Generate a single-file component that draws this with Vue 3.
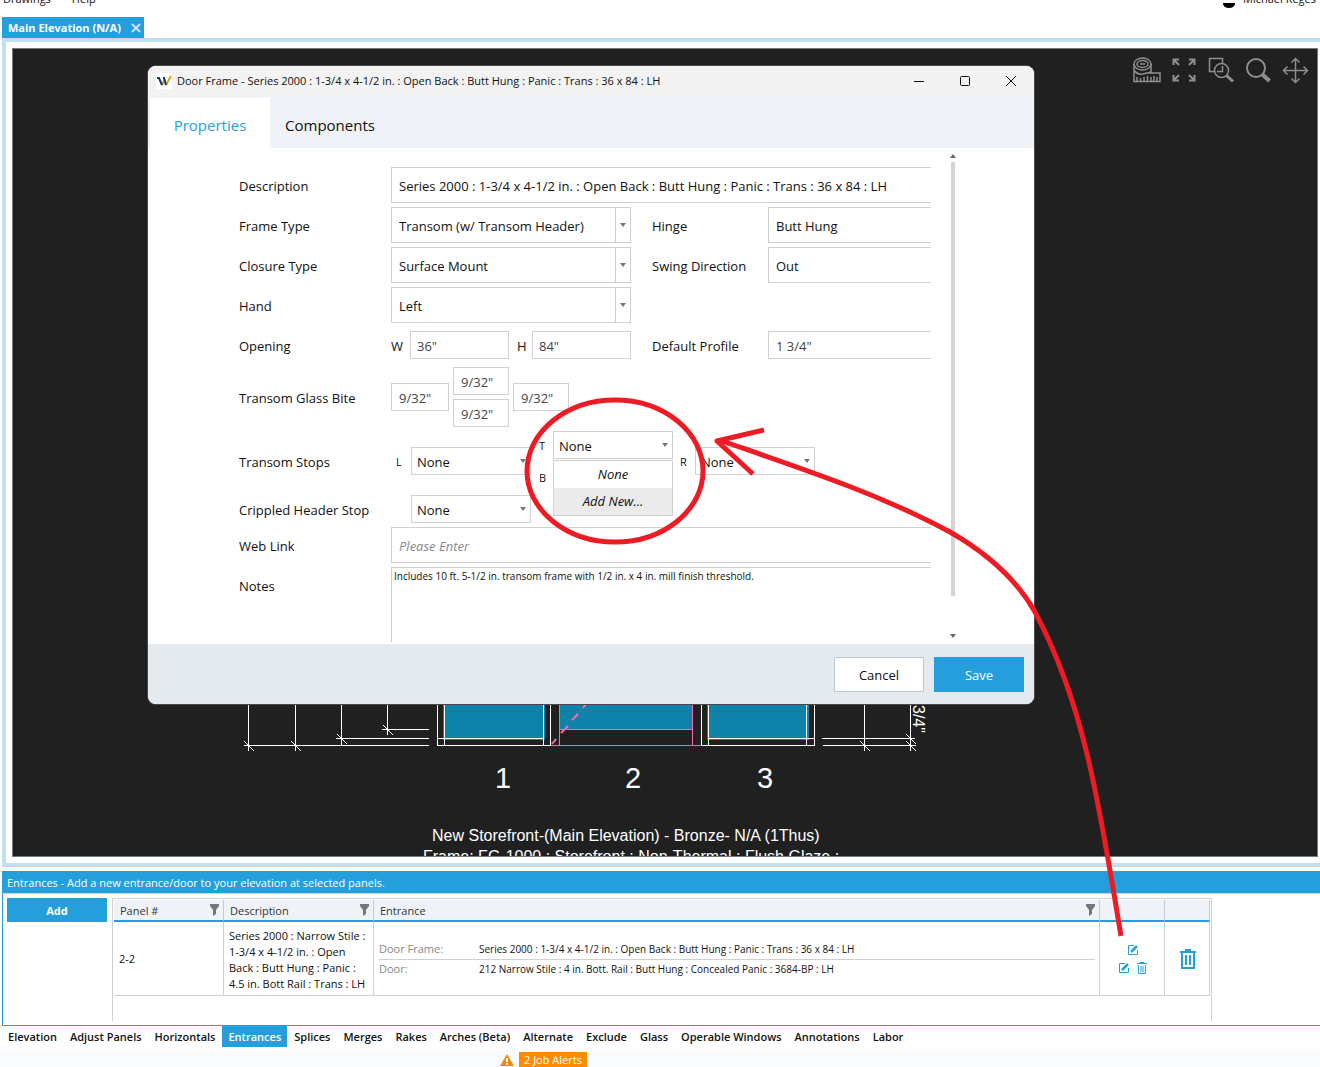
<script setup>
import { ref } from 'vue'

const title = 'Series 2000 : 1-3/4 x 4-1/2 in. : Open Back : Butt Hung : Panic : Trans : 36 x 84 : LH'
const description = ref(title)
const hinge = ref('Butt Hung')
const swing = ref('Out')
const openingWidth = ref('36"')
const openingHeight = ref('84"')
const profile = ref('1 3/4"')
const bite = ref({ left: '9/32"', top: '9/32"', bottom: '9/32"', right: '9/32"' })
const webLink = ref('')
const notes = ref('Includes 10 ft. 5-1/2 in. transom frame with 1/2 in. x 4 in. mill finish threshold.')

const dropdowns = [
  { id: 'frame-type', label: 'Frame Type', value: 'Transom (w/ Transom Header)', side: 'Hinge', sideId: 'hinge', model: hinge },
  { id: 'closure-type', label: 'Closure Type', value: 'Surface Mount', side: 'Swing Direction', sideId: 'swing', model: swing },
  { id: 'hand', label: 'Hand', value: 'Left' }
]

const sections = [
  'Elevation', 'Adjust Panels', 'Horizontals', 'Entrances', 'Splices', 'Merges', 'Rakes',
  'Arches (Beta)', 'Alternate', 'Exclude', 'Glass', 'Operable Windows', 'Annotations', 'Labor'
]
const activeSection = ref('Entrances')

const ticks = [[248, 745], [295, 745], [341, 738], [387, 729], [864, 745], [910, 738], [910, 745]]
</script>

<template>
  <div class="app">
    <header class="menubar">
      <nav class="menu">
        <a href="#drawings">Drawings</a>
        <a href="#help">Help</a>
      </nav>
      <div class="user">
        <svg width="14" height="18" viewBox="0 0 14 18" aria-hidden="true">
          <circle cx="7" cy="4" r="4" />
          <path d="M1 12h12v1q-1 4-6 4t-6-4z" />
        </svg>
        <span>Michael Reges</span>
      </div>
    </header>

    <div class="doc-tabs">
      <div class="doc-tab">
        <span>Main Elevation (N/A)</span>
        <button type="button" aria-label="Close tab">
          <svg width="10" height="10" viewBox="0 0 10 10"><path d="M1 1l8 8M9 1l-8 8" /></svg>
        </button>
      </div>
    </div>

    <main class="frame">
      <div class="stage">
        <svg class="drawing" aria-label="Elevation drawing">
          <g transform="translate(-13 -49)">
            <g fill="#0f82aa">
              <path d="M443 600h102v140H443zM559 600h134v129H559zM707 600h102v140H707z" />
            </g>
            <g class="lines white">
              <path d="M248.500 600V751M295.500 600V751M341.500 600V745M387.500 600V735" />
              <path d="M244 745.500H429M336 738.500H429M382 729.500H429" />
              <path d="M437.500 600V745.500H550.500V600M444.500 600V745M543.500 600V745M437 738.500H543" />
              <path d="M701.500 600V745.500H814.500V600M708.500 600V745M806.500 600V745M708 738.500H814" />
              <path d="M864.500 600V751M910.500 600V751M822 738.500H915M823 745.500H916" />
              <path v-for="([x, y], i) in ticks" :key="i" :d="`M${x - 4} ${y - 4}L${x + 6} ${y + 6}`" />
            </g>
            <g class="lines pink">
              <path d="M559.500 600V745M692.500 600V745M559 729.500H692M551 745.500H701" />
            </g>
            <path class="swing-line" d="M552 744l4-5M561 733l7-7M572 720l6-6M583 708l4-5" />
            <g class="numbers">
              <text x="503" y="788">1</text>
              <text x="633" y="788">2</text>
              <text x="765" y="788">3</text>
            </g>
            <g class="caption">
              <text x="432" y="841">New Storefront-(Main Elevation) - Bronze- N/A (1Thus)</text>
              <text x="423" y="862">Frame: FG-1000 : Storefront : Non-Thermal : Flush Glaze :</text>
              <text transform="translate(913 705) rotate(90)">3/4"</text>
            </g>
          </g>
        </svg>

        <div class="tools">
          <button type="button" aria-label="Measure">
            <svg viewBox="0 0 28 28">
              <path d="M1 8v17.500h26V17H14M1 14q3 5 9 4l8-2V8" />
              <ellipse cx="9.500" cy="8" rx="8.500" ry="6" />
              <ellipse cx="9.500" cy="8" rx="5.500" ry="3.500" />
              <path d="M7 8h5" />
              <path d="M4 25v-4M7.500 25v-3M11 25v-4M14.500 25v-5M18 25v-4M21 25v-5M24 25v-4" />
            </svg>
          </button>
          <button type="button" aria-label="Fit to window">
            <svg viewBox="0 0 28 28" class="bold">
              <path d="M3.500 9V3.500H9M4 4l5 5M19 3.500h5.500V9M24 4l-5 5M3.500 19v5.500H9M4 24l5-5M19 24.500h5.500V19M24 24l-5-5" />
            </svg>
          </button>
          <button type="button" aria-label="Zoom to selection">
            <svg viewBox="0 0 28 28">
              <path d="M7 15.500H2.500V2.500h13V7M10 15.500h5.500V10" />
              <circle cx="14.500" cy="14.500" r="7" />
              <path d="M19.500 19.500l6.500 6" stroke-width="3" />
            </svg>
          </button>
          <button type="button" aria-label="Zoom">
            <svg viewBox="0 0 28 28">
              <circle cx="12" cy="12" r="9" stroke-width="2" />
              <path d="M18.500 18.500l7 6.500" stroke-width="4" />
            </svg>
          </button>
          <button type="button" aria-label="Pan">
            <svg viewBox="0 0 28 28">
              <path d="M14.500 3v23M3 14.500h23M10.500 6.500l4-4 4 4M10.500 22.500l4 4 4-4M6.500 10.500l-4 4 4 4M22.500 10.500l4 4-4 4" />
            </svg>
          </button>
        </div>
      </div>
    </main>

    <section class="panel">
      <h2>Entrances - Add a new entrance/door to your elevation at selected panels.</h2>
      <div class="panel-body">
        <button type="button" class="add">Add</button>
        <div class="grid-box">
          <table>
            <colgroup>
              <col class="c-panel" /><col class="c-desc" /><col class="c-entrance" /><col class="c-edit" /><col class="c-delete" />
            </colgroup>
            <thead>
              <tr>
                <th v-for="name in ['Panel #', 'Description', 'Entrance']" :key="name">
                  <div class="th">
                    <span>{{ name }}</span>
                    <svg width="10" height="12" viewBox="0 0 10 12" aria-hidden="true"><path d="M1 0h9v2L7 6v4l-3 2V6L1 2z" /></svg>
                  </div>
                </th>
                <th></th>
                <th></th>
              </tr>
            </thead>
            <tbody>
              <tr>
                <td>2-2</td>
                <td class="desc">Series 2000 : Narrow Stile :<br />1-3/4 x 4-1/2 in. : Open<br />Back : Butt Hung : Panic :<br />4.5 in. Bott Rail : Trans : LH</td>
                <td>
                  <dl>
                    <div><dt>Door Frame:</dt><dd>{{ title }}</dd></div>
                    <div><dt>Door:</dt><dd>212 Narrow Stile : 4 in. Bott. Rail : Butt Hung : Concealed Panic : 3684-BP : LH</dd></div>
                  </dl>
                </td>
                <td>
                  <div class="edit-icons">
                    <button type="button" aria-label="Edit door frame">
                      <svg width="12" height="12" viewBox="0 0 12 12"><path d="M7 1.500H1.500v9h9V6" /><path d="M4 8l6-6" stroke-width="2.500" /></svg>
                    </button>
                    <div>
                      <button type="button" aria-label="Edit door">
                        <svg width="12" height="12" viewBox="0 0 12 12"><path d="M7 1.500H1.500v9h9V6" /><path d="M4 8l6-6" stroke-width="2.500" /></svg>
                      </button>
                      <button type="button" aria-label="Delete door">
                        <svg width="12" height="12" viewBox="0 0 12 12"><path d="M1 1.500h10M4 .5h4M2.500 3v8.500h7V3M5 4v6M7 4v6" /></svg>
                      </button>
                    </div>
                  </div>
                </td>
                <td>
                  <button type="button" class="delete" aria-label="Delete entrance">
                    <svg width="16" height="20" viewBox="0 0 16 20"><path d="M0 3h16M5 1h6M2 4v15h12V4M6 6v10M10 6v10" stroke-width="2" /></svg>
                  </button>
                </td>
              </tr>
            </tbody>
          </table>
        </div>
      </div>
    </section>

    <nav class="sections">
      <button
        v-for="name in sections"
        :key="name"
        type="button"
        :class="{ active: name === activeSection }"
        @click="activeSection = name"
      >{{ name }}</button>
    </nav>

    <footer class="status">
      <svg width="14" height="12" viewBox="0 0 14 12" aria-hidden="true">
        <path d="M7 0l7 12H0z" fill="#f58a07" />
        <path d="M7 4v4M7 9v2" stroke="#fff" stroke-width="2" />
      </svg>
      <a href="#alerts">2 Job Alerts</a>
    </footer>

    <div class="dialog" role="dialog" aria-labelledby="dialog-title">
      <div class="titlebar">
        <svg class="logo" width="16" height="16" viewBox="0 0 16 16" aria-hidden="true">
          <path d="M0 0h16v16H0z" fill="#fff" />
          <g fill="none" stroke-width="2">
            <path d="M10 12l5-9M6 12l3-6" stroke="#d9a70c" />
            <path d="M1 5h2l3 7M7 5h1l2 7" stroke="#0d3c66" />
          </g>
        </svg>
        <span id="dialog-title">Door Frame - {{ title }}</span>
        <div class="window-buttons">
          <button type="button" aria-label="Minimize"><svg width="12" height="12" viewBox="0 0 12 12"><path d="M1 6.500h10" /></svg></button>
          <button type="button" aria-label="Maximize"><svg width="12" height="12" viewBox="0 0 12 12"><rect x="1.500" y="1.500" width="9" height="9" rx="1" /></svg></button>
          <button type="button" aria-label="Close"><svg width="12" height="12" viewBox="0 0 12 12"><path d="M1 1l10 10M11 1L1 11" /></svg></button>
        </div>
      </div>

      <div class="dialog-tabs">
        <button type="button" class="active">Properties</button>
        <button type="button">Components</button>
      </div>

      <div class="dialog-body">
        <form id="frame-form" class="form" @submit.prevent>
          <label for="description">Description</label>
          <input id="description" v-model="description" class="field wide" type="text" />

          <template v-for="d in dropdowns" :key="d.id">
            <label :for="d.id" class="first">{{ d.label }}</label>
            <div class="select split">
              <select :id="d.id"><option>{{ d.value }}</option></select>
              <svg width="6" height="4" viewBox="0 0 6 4" aria-hidden="true"><path d="M0 0h6L3 4z" /></svg>
            </div>
            <template v-if="d.side">
              <label :for="d.sideId">{{ d.side }}</label>
              <input :id="d.sideId" v-model="d.model.value" class="field" type="text" />
            </template>
          </template>

          <span class="first">Opening</span>
          <div class="opening">
            <label for="opening-w">W</label>
            <input id="opening-w" v-model="openingWidth" class="small" type="text" />
            <label for="opening-h">H</label>
            <input id="opening-h" v-model="openingHeight" class="small" type="text" />
          </div>
          <label for="profile">Default Profile</label>
          <input id="profile" v-model="profile" class="small padded" type="text" />

          <span class="first">Transom Glass Bite</span>
          <div class="bite">
            <input v-model="bite.left" class="small padded" type="text" aria-label="Left glass bite" />
            <div class="pair">
              <input v-model="bite.top" class="small padded" type="text" aria-label="Top glass bite" />
              <input v-model="bite.bottom" class="small padded" type="text" aria-label="Bottom glass bite" />
            </div>
            <input v-model="bite.right" class="small padded" type="text" aria-label="Right glass bite" />
          </div>

          <span class="first">Transom Stops</span>
          <div class="stops">
            <label for="stop-l">L</label>
            <div class="select short">
              <select id="stop-l"><option>None</option></select>
              <svg width="6" height="4" viewBox="0 0 6 4" aria-hidden="true"><path d="M0 0h6L3 4z" /></svg>
            </div>
            <div class="stack">
              <label for="stop-t">T</label>
              <div class="select short">
                <select id="stop-t"><option>None</option></select>
                <svg width="6" height="4" viewBox="0 0 6 4" aria-hidden="true"><path d="M0 0h6L3 4z" /></svg>
                <ul class="options" role="listbox" aria-label="Top stop">
                  <li role="option" aria-selected="false">None</li>
                  <li role="option" aria-selected="true">Add New...</li>
                </ul>
              </div>
              <label for="stop-b">B</label>
              <div class="select short">
                <select id="stop-b"><option></option></select>
              </div>
            </div>
            <label for="stop-r">R</label>
            <div class="select short">
              <select id="stop-r"><option>None</option></select>
              <svg width="6" height="4" viewBox="0 0 6 4" aria-hidden="true"><path d="M0 0h6L3 4z" /></svg>
            </div>
          </div>

          <label for="crippled" class="first">Crippled Header Stop</label>
          <div class="stops crippled">
            <div class="select short">
              <select id="crippled"><option>None</option></select>
              <svg width="6" height="4" viewBox="0 0 6 4" aria-hidden="true"><path d="M0 0h6L3 4z" /></svg>
            </div>
          </div>

          <label for="web-link" class="first">Web Link</label>
          <input id="web-link" v-model="webLink" class="field wide" type="text" placeholder="Please Enter" />

          <label for="notes" class="first notes-label">Notes</label>
          <textarea id="notes" v-model="notes" class="wide"></textarea>
        </form>
        <div class="scrollbar" aria-hidden="true">
          <svg width="6" height="4" viewBox="0 0 6 4"><path d="M0 4h6L3 0z" /></svg>
          <div class="track"><div class="thumb"></div></div>
          <svg width="6" height="4" viewBox="0 0 6 4"><path d="M0 0h6L3 4z" /></svg>
        </div>
      </div>

      <div class="dialog-footer">
        <button type="button" class="cancel">Cancel</button>
        <button type="submit" form="frame-form" class="save">Save</button>
      </div>
    </div>

    <svg class="markup" aria-hidden="true">
      <ellipse cx="615" cy="471" rx="88" ry="71" />
      <path d="M1121 936C1110 870 1100 806 1087 754C1074 700 1058 655 1035 612C1018 582 992 556 950 532C880 494 800 468 722 441" />
      <path d="M764 430L717 441L753 474" />
    </svg>
  </div>
</template>

<style>
body {
  margin: 0;
  background: #fff;
}
</style>

<style scoped>
.app {
  position: relative;
  display: flex;
  flex-direction: column;
  height: 100vh;
  min-height: 1000px;
  overflow: hidden;
  font-family: "Open Sans", "Noto Sans", sans-serif;
  font-size: 11px;
  line-height: 16px;
  color: #111;
}
.app * {
  box-sizing: border-box;
}
button,
input,
select,
textarea {
  font: inherit;
  color: inherit;
  margin: 0;
  padding: 0;
  border: 0;
  border-radius: 0;
  background: none;
  outline: none;
}
a {
  color: inherit;
  text-decoration: none;
}

.menubar {
  display: flex;
  justify-content: space-between;
  align-items: flex-start;
  flex: none;
  height: 26px;
  margin-top: -9px;
  padding-left: 3px;
}
.menu {
  display: flex;
  gap: 21px;
}
.user {
  display: flex;
  gap: 7px;
  white-space: nowrap;
  padding-right: 4px;
}

.doc-tabs {
  flex: none;
  display: flex;
  padding-left: 2px;
}
.doc-tab {
  display: flex;
  align-items: center;
  gap: 10px;
  height: 21px;
  padding: 0 3px 0 6px;
  background: #259fdb;
  color: #fff;
  font-weight: 700;
}
.doc-tab button {
  display: flex;
}
.doc-tab svg {
  stroke: #c9e7f6;
  stroke-width: 2;
}

.frame {
  flex: 1;
  min-height: 0;
  display: flex;
  margin: 0 0 4px 2px;
  padding: 9px 2px 9px 6px;
  border-left: 4px solid #bfe1f2;
  border-top: 1px solid #cfd3d6;
  border-bottom: 1px solid #cfd3d6;
  box-shadow: inset 0 3px #bfe1f2, inset 0 -3px #bfe1f2;
}
.stage {
  position: relative;
  flex: 1;
  display: flex;
  justify-content: flex-end;
  align-items: flex-start;
  border: 1px solid #777;
  background: #202020;
  overflow: hidden;
}
.drawing {
  position: absolute;
  inset: 0;
  width: 100%;
  height: 100%;
}
.lines {
  fill: none;
  shape-rendering: crispEdges;
}
.white {
  stroke: #fff;
}
.pink {
  stroke: #ff69b4;
}
.swing-line {
  stroke: #ff69b4;
  stroke-width: 2;
}
.drawing text {
  font-family: "Liberation Sans", Arial, sans-serif;
  fill: #fff;
}
.numbers text {
  font-size: 29px;
  text-anchor: middle;
}
.caption text {
  font-size: 16px;
}
.tools {
  position: relative;
  display: flex;
  gap: 9px;
  padding: 7px 8px;
}
.tools button {
  width: 28px;
  height: 28px;
}
.tools svg {
  display: block;
  width: 28px;
  height: 28px;
  fill: none;
  stroke: #8e8e8e;
  stroke-width: 1.5;
}
.tools .bold {
  stroke-width: 2;
}

.panel {
  flex: none;
  margin-left: 2px;
}
.panel h2 {
  margin: 0;
  height: 22px;
  padding-left: 5px;
  background: #259fdb;
  color: #fff;
  font-size: 11px;
  font-weight: 400;
  line-height: 24px;
}
.panel-body {
  display: flex;
  align-items: flex-start;
  gap: 5px;
  height: 133px;
  padding: 4px;
  border-top: 1px solid #cfd3d6;
  border-left: 1px solid #259fdb;
  border-bottom: 1px solid #259fdb;
}
.add {
  width: 100px;
  height: 24px;
  padding-top: 2px;
  background: #259fdb;
  color: #fff;
  font-weight: 700;
}
.grid-box {
  align-self: stretch;
  padding: 1px 1px 0;
  border: 1px solid #d0d0d0;
  border-bottom: 0;
}
table {
  table-layout: fixed;
  width: 1096px;
  border-collapse: separate;
  border-spacing: 0;
}
.c-panel { width: 110px; }
.c-desc { width: 150px; }
.c-entrance { width: 726px; }
.c-edit { width: 65px; }
.c-delete { width: 45px; }
th {
  height: 22px;
  padding: 0 4px 0 6px;
  background: #eff3f8;
  border-right: 1px solid #c3cdd4;
  border-bottom: 2px solid #259fdb;
  font-weight: 400;
  color: #333;
  text-align: left;
}
.th {
  display: flex;
  justify-content: space-between;
  align-items: center;
}
.th span {
  padding-top: 1px;
}
.th svg {
  fill: #777;
}
td {
  height: 74px;
  padding: 0 4px 0 5px;
  border-right: 1px solid #d0d0d0;
  border-bottom: 1px solid #d0d0d0;
  vertical-align: middle;
}
.desc {
  padding-top: 2px;
  white-space: nowrap;
}
dl {
  margin: 0;
}
dl div {
  display: flex;
  height: 20px;
  align-items: center;
}
dl div + div {
  border-top: 1px solid #d0d0d0;
}
dt {
  width: 100px;
  color: #888;
}
dd {
  margin: 0;
  font-size: 10px;
}
.edit-icons,
.edit-icons button,
.delete {
  display: flex;
}
.edit-icons {
  flex-direction: column;
  align-items: center;
  gap: 6px;
}
.edit-icons div {
  display: flex;
  gap: 6px;
}
.edit-icons svg,
.delete svg {
  fill: none;
  stroke: #259fdb;
}
.delete {
  margin: 0 auto;
}

.sections {
  flex: none;
  display: flex;
  gap: 1px;
  height: 23px;
  padding-left: 2px;
}
.sections button {
  height: 21px;
  padding: 0 6px;
  font-weight: 600;
  white-space: nowrap;
}
.sections .active {
  background: #259fdb;
  color: #fff;
}
.status {
  flex: none;
  display: flex;
  align-items: center;
  gap: 5px;
  height: 18px;
  padding: 3px 0 0 500px;
  background: #fafbfd;
}
.status a {
  height: 15px;
  padding: 0 5px;
  background: #ff8c00;
  color: #fff;
  line-height: 16px;
}

.dialog {
  position: absolute;
  left: 148px;
  top: 66px;
  width: 886px;
  display: flex;
  flex-direction: column;
  border-radius: 8px;
  overflow: hidden;
  background: #fff;
  box-shadow: 0 0 0 1px #4a4a4a;
  font-size: 13px;
}
.titlebar {
  display: flex;
  align-items: center;
  height: 30px;
  padding-left: 8px;
  gap: 5px;
  background: #f3f3f3;
  font-size: 11px;
}
.window-buttons {
  display: flex;
  margin-left: auto;
}
.window-buttons button {
  display: flex;
  justify-content: center;
  align-items: center;
  width: 46px;
  height: 28px;
}
.window-buttons svg {
  fill: none;
  stroke: #111;
}
.dialog-tabs {
  display: flex;
  height: 52px;
  padding: 2px 2px 0;
  background: #eff3f8;
  font-size: 15px;
}
.dialog-tabs button {
  width: 120px;
  padding-top: 4px;
}
.dialog-tabs .active {
  background: #fff;
  color: #259fdb;
}
.dialog-body {
  display: flex;
  height: 496px;
  padding: 0 78px 2px 90px;
}
.form {
  flex: 1;
  min-width: 0;
  display: grid;
  grid-template-columns: 133px 240px 97px 240px;
  grid-auto-rows: max-content;
  column-gap: 20px;
  row-gap: 4px;
  align-items: center;
  padding-top: 19px;
  overflow: hidden;
}
.form > label,
.form > span {
  padding: 2px 0 0 1px;
}
.first {
  grid-column: 1;
}
.field,
.split {
  height: 36px;
}
.field,
.small,
textarea,
.select {
  border: 1px solid #d0d0d0;
  background: #fff;
}
.field {
  padding: 2px 7px 0;
}
.wide {
  grid-column: 2 / -1;
}
.field::placeholder {
  font-style: italic;
  color: #888;
}
.small {
  height: 28px;
  min-width: 0;
  padding: 2px 6px 0;
  color: #444;
}
.padded {
  padding: 2px 7px 0;
}
.select {
  position: relative;
  display: flex;
  align-items: center;
}
.select select {
  appearance: none;
  flex: 1;
  min-width: 0;
  height: 100%;
  padding: 2px 7px 0;
}
.select > svg {
  fill: #777;
  flex: none;
  margin-right: 4px;
}
.split::after {
  content: "";
  position: absolute;
  right: 14px;
  top: 0;
  bottom: 0;
  border-left: 1px solid #d0d0d0;
}
.opening {
  display: grid;
  grid-template-columns: 19px 99px 23px 99px;
  align-items: center;
  height: 36px;
}
.opening label {
  padding-top: 2px;
}
.opening label:nth-of-type(2) {
  padding-left: 8px;
}
.bite {
  display: grid;
  grid-template-columns: 58px 56px 56px;
  column-gap: 4px;
  align-items: center;
}
.pair {
  display: grid;
  row-gap: 4px;
}
.stops {
  grid-column: 2 / -1;
  display: flex;
  align-items: center;
}
.stops label {
  width: 20px;
  padding: 2px 0 0 5px;
  font-size: 11px;
}
.short {
  width: 120px;
  height: 28px;
}
.short select {
  padding: 2px 5px 0;
}
.stack {
  display: grid;
  grid-template-columns: 15px 120px;
  row-gap: 4px;
  align-items: center;
  margin-right: 2px;
  padding-left: 7px;
}
.stack label {
  width: 15px;
  padding: 2px 0 0 1px;
}
.crippled {
  padding-left: 20px;
}
.options {
  position: absolute;
  z-index: 2;
  left: -1px;
  top: 28px;
  width: 120px;
  margin: 0;
  padding: 0;
  border: 1px solid #d0d0d0;
  background: #fff;
  list-style: none;
  font-style: italic;
  text-align: center;
  line-height: 27px;
}
.options li:last-child {
  background: #ebebeb;
}
.form > .notes-label {
  align-self: start;
  padding-top: 11px;
}
textarea {
  height: 100px;
  padding: 0 2px;
  font-size: 10px;
  line-height: 16px;
  resize: none;
}
.scrollbar {
  display: flex;
  flex-direction: column;
  align-items: center;
  width: 6px;
  margin-left: 19px;
  padding: 6px 0 4px;
}
.scrollbar svg {
  flex: none;
  fill: #666;
}
.track {
  flex: 1;
  padding: 4px 0;
}
.thumb {
  width: 4px;
  height: 434px;
  background: #d6d3d4;
}
.dialog-footer {
  display: flex;
  justify-content: flex-end;
  align-items: center;
  gap: 10px;
  height: 60px;
  padding: 0 10px;
  background: #e5eaee;
}
.dialog-footer button {
  width: 90px;
  height: 35px;
  padding-top: 2px;
}
.cancel {
  border: 1px solid #b9cbd4;
  background: #fff;
}
.save {
  background: #259fdb;
  color: #fff;
}

.markup {
  position: absolute;
  inset: 0;
  width: 100%;
  height: 100%;
  pointer-events: none;
  fill: none;
  stroke: #ed1c24;
  stroke-width: 5;
  stroke-linejoin: round;
}
</style>
